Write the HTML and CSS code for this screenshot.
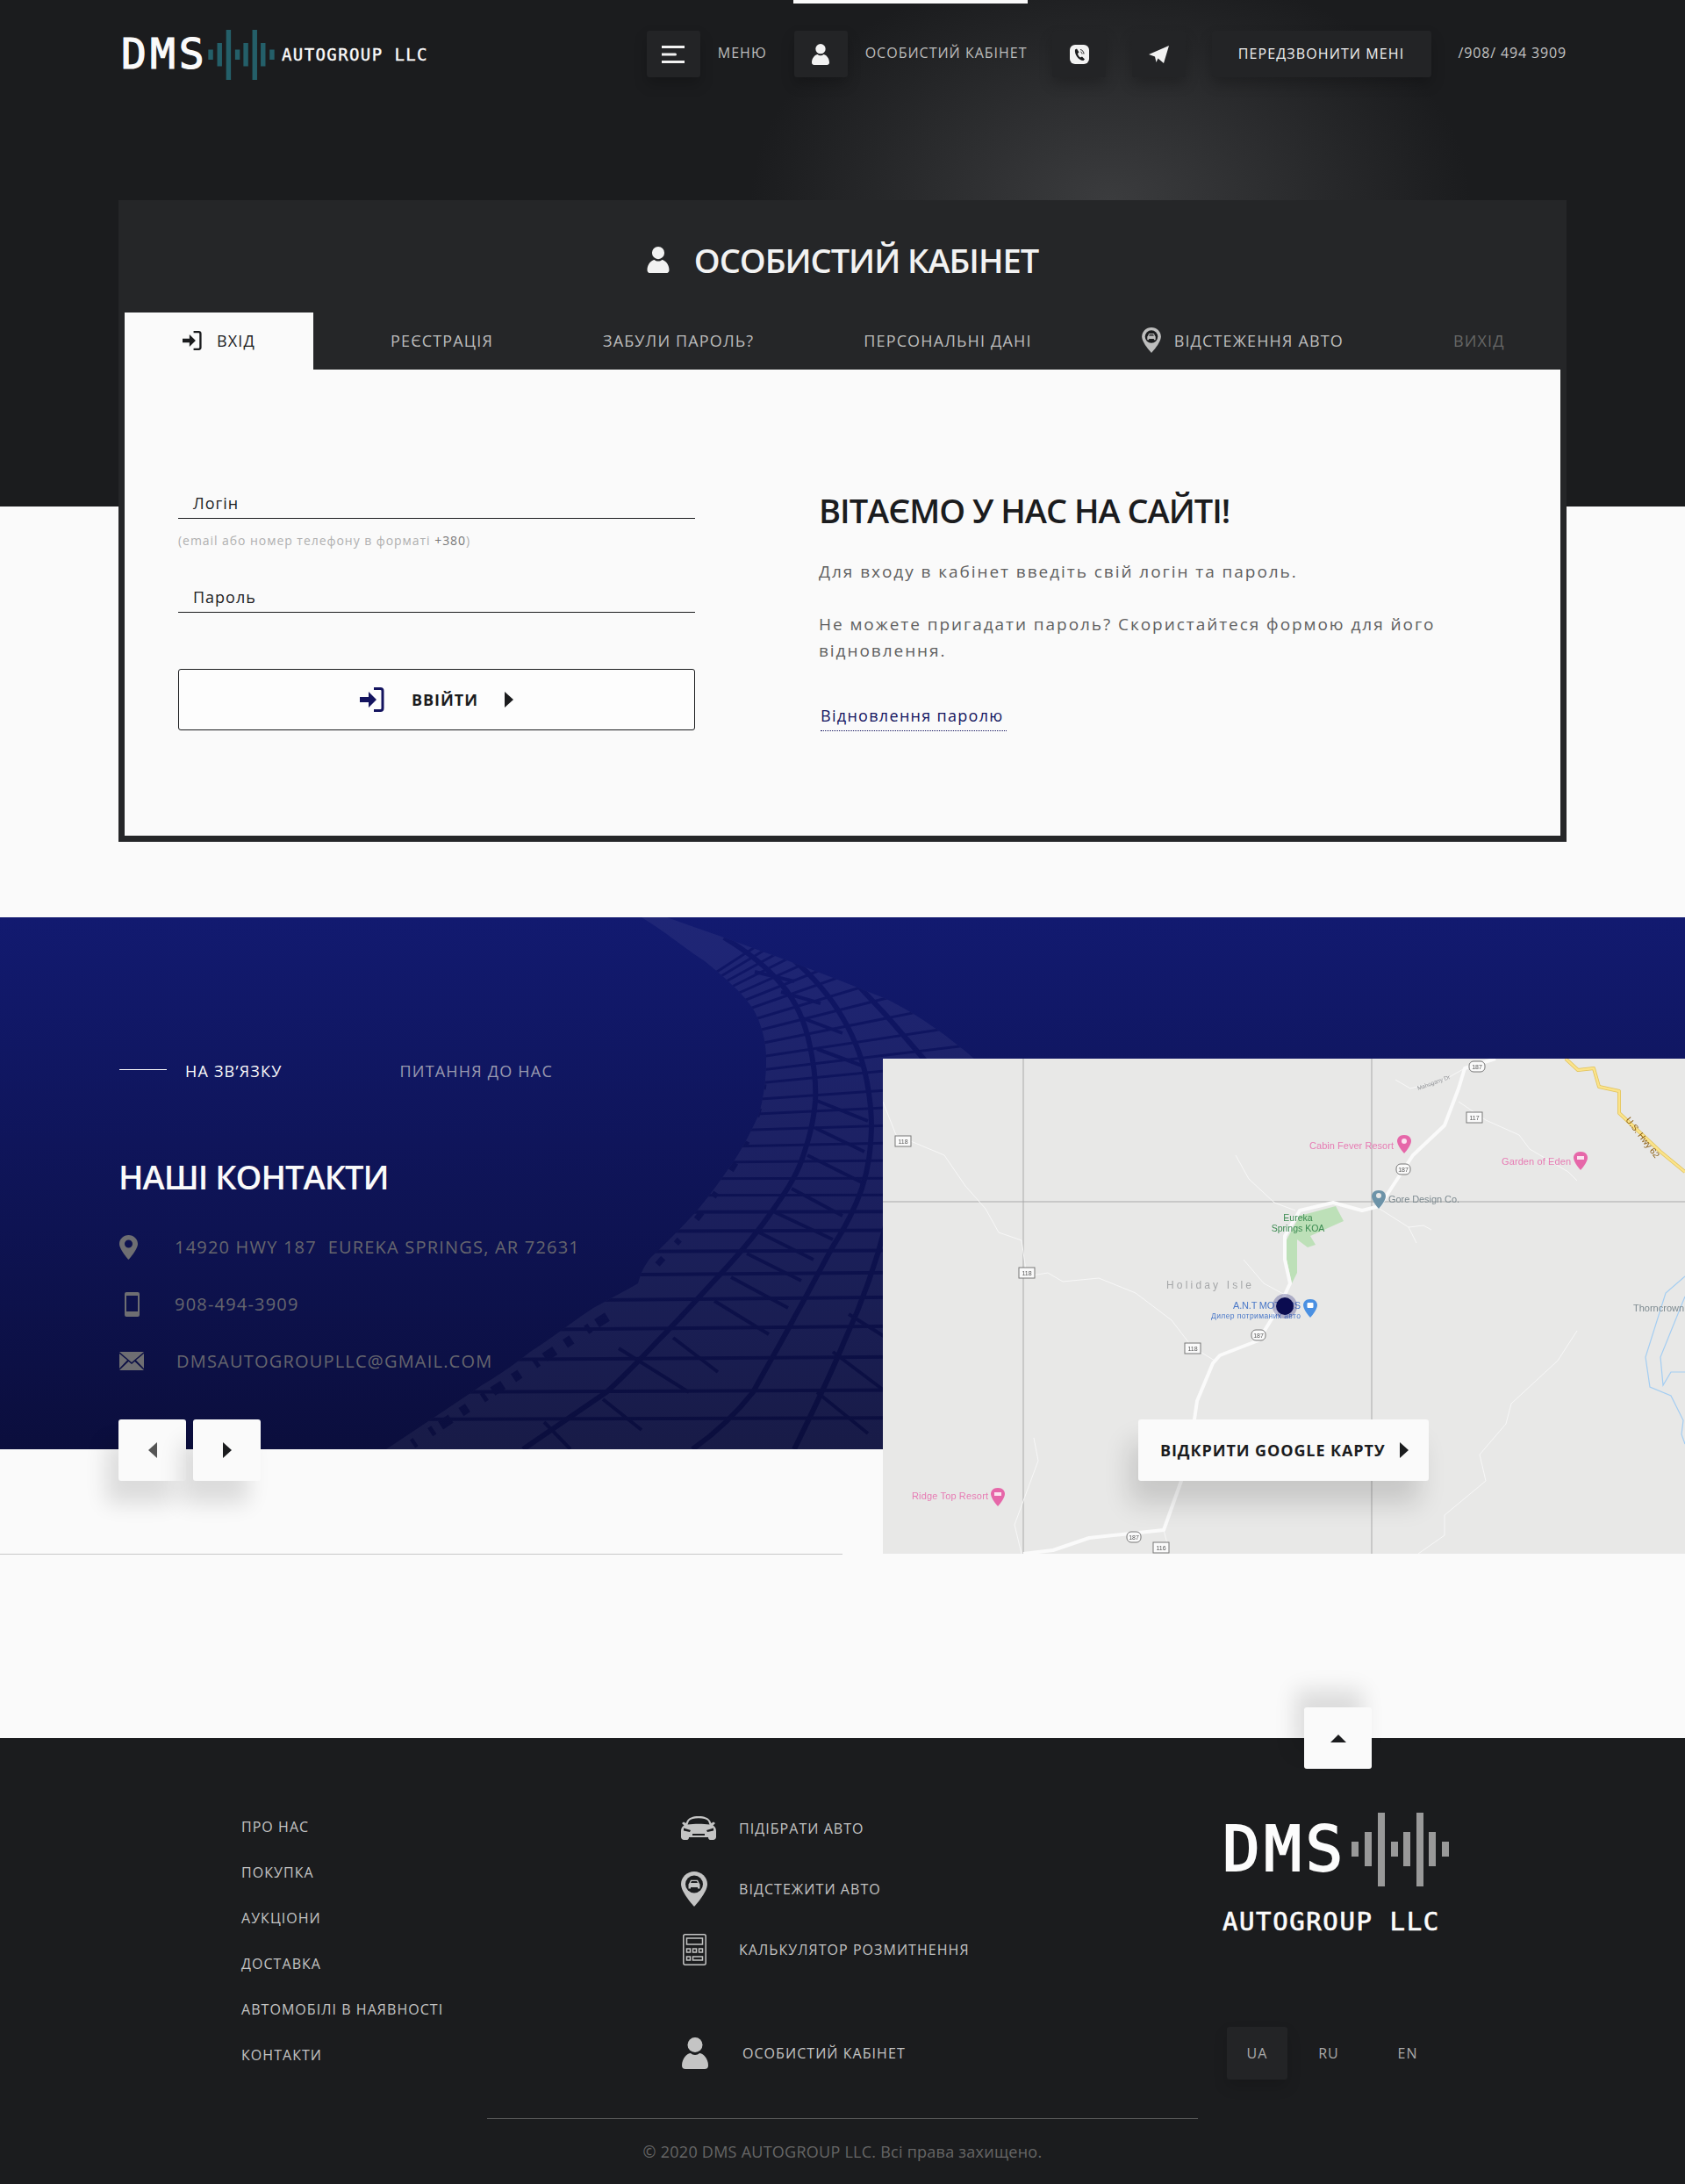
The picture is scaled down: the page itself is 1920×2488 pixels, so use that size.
FILE: index.html
```
<!DOCTYPE html>
<html lang="uk">
<head>
<meta charset="utf-8">
<title>DMS Autogroup LLC</title>
<link rel="stylesheet" href="styles.css">
</head>
<body>
<svg class="defs" width="0" height="0" aria-hidden="true">
  <symbol id="i-person" viewBox="0 0 30 36"><circle cx="15" cy="8.5" r="8.5"/><path d="M0 32C0 24 6 18 10 18 12 20.5 18 20.5 20 18 24 18 30 24 30 32 30 35 28 36 26 36H4C2 36 0 35 0 32Z"/></symbol>
  <symbol id="i-login" viewBox="0 0 28 28"><path d="M0 11H10V5L19 14 10 23V17H0Z"/><path d="M16 1.500H23.500Q26 1.500 26 4V24Q26 26.500 23.500 26.500H16" fill="none" stroke="currentColor" stroke-width="3"/></symbol>
  <symbol id="i-bars" viewBox="0 0 111 84"><path d="M0 33H8V50H0ZM15 22H23V61H15ZM30 0H38V84H30ZM45 33H53V50H45ZM59 22H67V61H59ZM74 0H82V84H74ZM88 22H96V61H88ZM103 33H111V50H103Z"/></symbol>
  <symbol id="i-car" viewBox="0 0 40 27"><path fill-rule="evenodd" d="M7 5C9 2 13 0 20 0S31 2 33 5L34.500 8 37 6.500 39 8 36.500 10.500C39 12 40 14 40 17V23.500C40 25.500 38.500 27 36.500 27H33.500C31.500 27 31 25.500 31 24H9C9 25.500 8.500 27 6.500 27H3.500C1.500 27 0 25.500 0 23.500V17C0 14 1 12 3.500 10.500L1 8 3 6.500 5.500 8ZM9 5.500 7.500 9.500C15 8.500 25 8.500 32.500 9.500L31 5.500C29 3 25 2.200 20 2.200S11 3 9 5.500ZM3 13.500V16.500L10 18 11 16ZM37 13.500 29 16 30 18 37 16.500ZM13 20V22H27V20Z"/></symbol>
  <symbol id="i-pin-car" viewBox="0 0 30 40"><path d="M15 0C6.700 0 0 6.500 0 14.500 0 24 15 40 15 40S30 24 30 14.500C30 6.500 23.300 0 15 0Z"/><circle cx="15" cy="14.500" r="10" fill="#1b1c1e"/><path d="M9.500 13 11 9.800H19L20.500 13 21.500 14.500V19.500H19V18H11V19.500H8.500V14.500ZM11 13H19L18 11H12Z"/></symbol>
</svg>

<div class="top">
  <header class="header">
    <a class="logo">
      <span class="logo-dms">DMS</span>
      <svg class="logo-bars"><use href="#i-bars"/></svg>
      <span class="logo-sub">AUTOGROUP LLC</span>
    </a>
    <nav class="nav">
      <span class="sq-btn"><svg class="i-menu" viewBox="0 0 26 20"><path d="M0 1.500H26M0 10H15.500M0 18.500H26"/></svg></span>
      <span class="nav-text nav-text-menu">МЕНЮ</span>
      <span class="sq-btn sq-account"><svg class="i-person-nav"><use href="#i-person"/></svg></span>
      <span class="nav-text nav-text-account">ОСОБИСТИЙ КАБІНЕТ</span>
      <span class="sq-btn sq-viber"><svg class="i-viber" viewBox="0 0 22 22"><rect width="22" height="22" rx="6" fill="#f2f2f2"/><path d="M6 5.500 8 4.500 10.500 8.500 9 10C9.500 12 10.500 13.500 12 14.500L14 13.500 17 16.500 15.500 18C10 18 5 11 6 5.500Z" fill="#1b1c1e"/><path d="M12 5.500C14.500 6 16 8 16 10.500M12.500 8C13.500 8.300 14 9.300 14 10.500" fill="none" stroke="#1b1c1e"/></svg></span>
      <span class="sq-btn sq-tg"><svg class="i-tg" viewBox="0 0 23 20"><path d="M23 0 17 20 10.500 14.500 8.500 19 7 12.500 0 10Z" fill="#f2f2f2"/></svg></span>
      <span class="call-btn">ПЕРЕДЗВОНИТИ МЕНІ</span>
      <span class="phone">/908/ 494 3909</span>
    </nav>
  </header>

  <main class="card">
    <h1 class="card-title"><svg class="i-title-person"><use href="#i-person"/></svg>ОСОБИСТИЙ КАБІНЕТ</h1>
    <div class="tabs">
      <a class="tab tab-active"><svg class="i-tab-login"><use href="#i-login"/></svg>ВХІД</a>
      <a class="tab tab-first">РЕЄСТРАЦІЯ</a>
      <a class="tab">ЗАБУЛИ ПАРОЛЬ?</a>
      <a class="tab">ПЕРСОНАЛЬНІ ДАНІ</a>
      <a class="tab tab-track"><svg class="i-tab-pin"><use href="#i-pin-car"/></svg>ВІДСТЕЖЕННЯ АВТО</a>
      <a class="tab tab-exit">ВИХІД</a>
    </div>
    <div class="panel">
      <form class="login-form">
        <div class="field">Логін</div>
        <p class="hint">(email або номер телефону в форматі <b>+380</b>)</p>
        <div class="field field-pass">Пароль</div>
        <button class="login-btn" type="button">
          <svg class="i-btn-login"><use href="#i-login"/></svg>
          <span>ВВІЙТИ</span>
          <i class="arrow-r"></i>
        </button>
      </form>
      <div class="welcome">
        <h2 class="welcome-title">ВІТАЄМО У НАС НА САЙТІ!</h2>
        <p class="welcome-p">Для входу в кабінет введіть свій логін та пароль.</p>
        <p class="welcome-p welcome-p2">Не можете пригадати пароль? Скористайтеся формою для його відновлення.</p>
        <a class="restore">Відновлення паролю</a>
      </div>
    </div>
  </main>
</div>

<section class="contacts">
  <div class="contacts-bg">
    <svg class="tire" viewBox="0 0 1920 606">
      <defs>
        <clipPath id="tireclip"><path d="M731 0C760 18 780 35 803 50 825 68 845 85 858 104 868 122 873 142 873 162 873 185 870 205 865 224 855 245 848 260 836 278 822 298 810 315 796 332 780 350 760 370 742 387 735 395 730 405 727 417 708 428 692 436 676 445 650 462 628 480 604 495 585 510 568 522 549 533 510 560 475 582 440 606H1110V161C1080 135 1045 110 1010 93 930 60 845 30 760 0Z"/></clipPath>
        <linearGradient id="tread" gradientUnits="userSpaceOnUse" x1="0" y1="0" x2="0" y2="606"><stop offset="0" stop-color="#10176a"/><stop offset="1" stop-color="#0b0e3d"/></linearGradient>
      </defs>
      <g clip-path="url(#tireclip)" fill="none">
        <rect x="400" y="0" width="800" height="606" fill="#fff" fill-opacity=".055"/>
        <g stroke="url(#tread)">
          <g stroke-width="3">
            <path d="M800 182 1110 145M800 169 1110 122M800 157 1110 95M800 145 1110 67M800 134 1110 41M800 123 1110 14.500M800 114 1110-10M800 105 1110-34M800 96 1110-59M800 88 1110-82M800 80 1110-106M800 73 1110-128"/>
            <path d="M780 197 1110 165M780 213 1110 190M780 228 1110 212"/>
            <path d="M760 245 1110 234M740 263 1110 255M720 280 1110 276M700 298 1110 297M680 317 1110 316"/>
          </g>
          <g stroke-width="4">
            <path d="M660 336 1110 335M640 358 1110 356M620 381 1110 379M600 408 1110 404M580 437 1110 432M560 470 1110 465M530 504 1110 500M480 541 1110 538M420 572 1110 570"/>
            <path d="M767 479 818 518M705 491 785 541M814 437 876 475M833 410 898 445M851 383 913 414M865 359 927 390M883 336 949 367M902 309 960 340M920 271 982 302M929 240 985 267M931 209 989 232M687 549 731 584M949 495 1010 541M967 452 1010 479M931 541 989 588M620 575 650 606"/>
            <path d="M931 150 985 170M915 115 960 132M890 85 935 98M860 62 905 73"/>
          </g>
          <g stroke-width="6">
            <path d="M825 23C850 38 875 58 891 77 908 97 918 122 923 147 928 170 930 190 929 209 927 235 921 255 913 278 905 300 890 320 876 340 855 370 832 395 811 417 790 440 770 462 749 483 730 503 712 522 691 541L596 606"/>
            <path d="M887 35C915 55 933 75 949 97 965 120 978 147 985 174 990 195 993 218 993 240 992 265 990 285 982 309 973 335 962 355 949 375 935 400 920 430 905 456 890 485 873 513 858 541 835 570 812 590 789 606"/>
            <path d="M967 66 1010 112 1060 170M1010 348C998 395 982 440 962 483 945 525 925 565 905 606"/>
          </g>
          <path stroke-width="11" stroke-dasharray="14 9 5 20 9 14" d="M692 455C660 475 630 495 600 515 570 535 530 560 470 600"/>
          <path stroke-width="7" stroke-dasharray="6 22 10 30" d="M870 190C866 225 850 265 825 300 800 340 770 372 745 400"/>
        </g>
      </g>
    </svg>
  </div>
  <div class="contact-left">
    <div class="contact-tabs">
      <i class="contact-line"></i>
      <a class="ctab ctab-active">НА ЗВ’ЯЗКУ</a>
      <a class="ctab">ПИТАННЯ ДО НАС</a>
    </div>
    <h2 class="contact-title">НАШІ КОНТАКТИ</h2>
    <div class="contact-row">
      <svg class="ci ci-pin" viewBox="0 0 21 28"><path fill-rule="evenodd" d="M10.500 0C4.700 0 0 4.500 0 10 0 16.500 10.500 28 10.500 28S21 16.500 21 10C21 4.500 16.300 0 10.500 0ZM10.500 5.500A4.500 4.500 0 1 1 10.500 14.500 4.500 4.500 0 0 1 10.500 5.500Z"/></svg>
      <span>14920 HWY 187&nbsp; EUREKA SPRINGS, AR 72631</span>
    </div>
    <div class="contact-row">
      <svg class="ci ci-phone" viewBox="0 0 17 28"><path fill-rule="evenodd" d="M2 0H15Q17 0 17 2V26Q17 28 15 28H2Q0 28 0 26V2Q0 0 2 0ZM2 4V22H15V4Z"/></svg>
      <span>908-494-3909</span>
    </div>
    <div class="contact-row">
      <svg class="ci ci-mail" viewBox="0 0 28 21"><path d="M0 0 14 12 28 0ZM0 2V19L9 9.500ZM28 2 19 9.500 28 19ZM0 21H28L17.500 11 14 14 10.500 11Z"/></svg>
      <span class="contact-mail">DMSAUTOGROUPLLC@GMAIL.COM</span>
    </div>
    <div class="arrows">
      <a class="arrow-btn"><i class="arrow-l"></i></a>
      <a class="arrow-btn"><i class="arrow-r"></i></a>
    </div>
    <hr class="contact-hr">
  </div>
  <div class="map">
    <svg class="map-svg" viewBox="0 0 914 564" font-family="'Liberation Sans', sans-serif">
      <path d="M160 0V564M557 0V564M0 163H914" stroke="#a9a9a9" fill="none"/>
      <path d="M516 168 525 185 487 202 493 212 484 215 472 206 472 244 466 256 460 229 458 210 475 179Z" fill="#bde0b8"/>
      <g fill="none" stroke="#f7f7f7" stroke-width="1" stroke-linejoin="round">
        <path d="M0 49 15 87 70 110 94 145 117 171 132 198 158 207 164 248 188 244 205 254 246 250 288 267 329 298 352 328 378 344"/>
        <path d="M402 110 417 137 446 164 470 173"/>
        <path d="M411 229 434 256 458 269"/>
        <path d="M566 171 599 192 616 190 625 195M599 192 608 210"/>
        <path d="M584 24 601 34 640 24 663 11"/>
        <path d="M656 49 687 70 725 87 737 103 781 129 791 139"/>
        <path d="M791 310 769 344 716 393 710 416 680 451 687 481 640 520 640 543 610 564"/>
        <path d="M172 432 177 458 150 531 158 564"/>
        <path d="M320 537 326 560"/>
      </g>
      <path fill="none" stroke="#fafafa" stroke-width="4" stroke-linejoin="round" d="M698 0 663 11 656 34 640 76 604 110 581 145 566 168 546 173 513 164 475 173 458 202 458 229 464 256 452 282 428 321 384 338 376 347 358 390 355 411 340 481 320 537 235 546 194 560 160 564"/>
      <path fill="none" stroke="#e0c25a" stroke-width="4" stroke-linejoin="round" d="M778 0 792 13 810 11 816 32 839 37 839 62 886 106 914 129"/>
      <path fill="none" stroke="#fbe38a" stroke-width="2.500" stroke-linejoin="round" d="M778 0 792 13 810 11 816 32 839 37 839 62 886 106 914 129"/>
      <g fill="none" stroke="#a3cdf2" stroke-width="1.200">
        <path d="M914 248 892 267 869 340 874 374 898 384 912 412 910 428 914 439"/>
        <path d="M914 271 886 340 889 372 898 357 914 357"/>
      </g>
      <g font-size="11" fill="#e77cb4">
        <text x="486" y="103" textLength="96">Cabin Fever Resort</text>
        <text x="705" y="121" textLength="79">Garden of Eden</text>
        <text x="33" y="502" textLength="87">Ridge Top Resort</text>
      </g>
      <g fill="#e667a9">
        <path d="M594 87C587 87 586 92 586 94 586 99 594 108 594 108S602 99 602 94C602 92 601 87 594 87Z"/>
        <path d="M795 106C788 106 787 111 787 113 787 118 795 127 795 127S803 118 803 113C803 111 802 106 795 106Z"/>
        <path d="M131 489C124 489 123 494 123 496 123 501 131 510 131 510S139 501 139 496C139 494 138 489 131 489Z"/>
      </g>
      <g fill="#fbe3f0"><circle cx="594" cy="94" r="3"/><rect x="791" y="111" width="8" height="4"/><rect x="127" y="494" width="8" height="4"/></g>
      <path d="M565 150C558 150 557 155 557 157 557 162 565 171 565 171S573 162 573 157C573 155 572 150 565 150Z" fill="#6d93a8"/>
      <circle cx="565" cy="156" r="3" fill="#e8e8e7"/>
      <path d="M487 274C480 274 479 279 479 281 479 286 487 295 487 295S495 286 495 281C495 279 494 274 487 274Z" fill="#4a90e2"/>
      <rect x="483.500" y="278" width="7" height="6" rx="1" fill="#fff"/>
      <text x="576" y="164" font-size="11" fill="#7d8a90" textLength="81">Gore Design Co.</text>
      <g font-size="10.500" fill="#3a8a50" text-anchor="middle"><text x="473" y="185">Eureka</text><text x="473" y="197">Springs KOA</text></g>
      <text x="323" y="262" font-size="12" fill="#a5a7a9" textLength="97">Holiday Isle</text>
      <text x="399" y="285" font-size="11" fill="#4a78c8" textLength="77">A.N.T MOTORS</text>
      <text x="374" y="296" font-size="8.500" fill="#4a78c8" textLength="102">Дилер потриманих авто</text>
      <text x="855" y="288" font-size="11" fill="#7d8a90">Thorncrown</text>
      <text x="0" y="0" font-size="10" fill="#8a5c10" transform="translate(846 70) rotate(52)">U.S. Hwy 62</text>
      <text x="0" y="0" font-size="6.500" fill="#8e9094" transform="translate(610 36) rotate(-20)">Mahogany Dr</text>
      <g fill="#fafafa" stroke="#777" font-size="7">
        <rect x="668" y="3" width="18" height="12" rx="5"/><rect x="585" y="120" width="16" height="12" rx="5"/><rect x="420" y="309" width="16" height="12" rx="5"/><rect x="278" y="539" width="16" height="12" rx="5"/>
        <rect x="665" y="61" width="18" height="12"/><rect x="14" y="88" width="18" height="12"/><rect x="155" y="238" width="18" height="12"/><rect x="344" y="324" width="18" height="12"/><rect x="308" y="551" width="18" height="12"/>
      </g>
      <g fill="#555" font-size="7" text-anchor="middle">
        <text x="677" y="12">187</text><text x="593" y="129">187</text><text x="428" y="318">187</text><text x="286" y="548">187</text>
        <text x="674" y="70">117</text><text x="23" y="97">118</text><text x="164" y="247">118</text><text x="353" y="333">118</text><text x="317" y="560">116</text>
      </g>
      <circle cx="458" cy="282" r="14" fill="#23237a" fill-opacity=".3"/>
      <circle cx="458" cy="282" r="10" fill="#0b0c50"/>
    </svg>
    <a class="map-btn">ВІДКРИТИ GOOGLE КАРТУ<i class="arrow-r"></i></a>
  </div>
</section>

<footer class="footer">
  <a class="up-btn"><i class="arrow-u"></i></a>
  <div class="footer-grid">
    <ul class="f-links">
      <li>ПРО НАС</li>
      <li>ПОКУПКА</li>
      <li>АУКЦІОНИ</li>
      <li>ДОСТАВКА</li>
      <li>АВТОМОБІЛІ В НАЯВНОСТІ</li>
      <li>КОНТАКТИ</li>
    </ul>
    <div class="f-services">
      <a class="f-row"><span class="f-ico"><svg class="fi-car"><use href="#i-car"/></svg></span>ПІДІБРАТИ АВТО</a>
      <a class="f-row"><span class="f-ico"><svg class="fi-pin"><use href="#i-pin-car"/></svg></span>ВІДСТЕЖИТИ АВТО</a>
      <a class="f-row"><span class="f-ico"><svg class="fi-calc" viewBox="0 0 27 36"><g fill="none" stroke="#c4c4c4" stroke-width="1.500"><rect x=".8" y=".8" width="25.400" height="34.400" rx="2"/><rect x="4.500" y="5" width="18" height="7"/><rect x="4.500" y="17" width="4" height="4"/><rect x="11.500" y="17" width="4" height="4"/><rect x="18.500" y="17" width="4" height="4"/><rect x="4.500" y="26" width="4" height="4"/><rect x="11.500" y="26" width="11" height="4"/></g></svg></span>КАЛЬКУЛЯТОР РОЗМИТНЕННЯ</a>
      <a class="f-row f-row-account"><span class="f-ico f-ico-account"><svg class="fi-person"><use href="#i-person"/></svg></span>ОСОБИСТИЙ КАБІНЕТ</a>
    </div>
    <div class="f-brand">
      <div class="f-logo">
        <span class="f-dms">DMS</span>
        <svg class="f-bars"><use href="#i-bars"/></svg>
      </div>
      <div class="f-sub">AUTOGROUP LLC</div>
      <div class="langs">
        <a class="lang lang-active">UA</a>
        <a class="lang lang-ru">RU</a>
        <a class="lang lang-en">EN</a>
      </div>
    </div>
  </div>
  <hr class="f-hr">
  <p class="copy">© 2020 DMS AUTOGROUP LLC. Всі права захищено.</p>
</footer>
</body>
</html>
```
FILE: styles.css
```
* { box-sizing: border-box; }
html, body { margin: 0; padding: 0; }
body {
  width: 1920px;
  height: 2488px;
  overflow: hidden;
  background: #fafafa;
  font-family: "Open Sans", "Noto Sans", sans-serif;
  color: #1b1c1e;
}
.defs { position: absolute; }
a { color: inherit; text-decoration: none; }
h1, h2, p, ul { margin: 0; padding: 0; }
ul { list-style: none; }
i { display: block; }

/* top area */
.top {
  padding: 0 135px;
  background:
    radial-gradient(ellipse 410px 270px at 1265px 228px, #3b3c3e 0%, rgba(59, 60, 62, 0) 100%) 0 0 / 100% 577px no-repeat,
    linear-gradient(#1b1c1e, #1b1c1e) 0 0 / 100% 577px no-repeat;
}
.header { display: flex; height: 228px; padding-top: 35px; align-items: flex-start; }
.logo { display: flex; align-items: center; height: 53px; margin-left: 3px; color: #fafafa; }
.logo-dms {
  font: 400 48px/53px "DejaVu Sans Mono", monospace; letter-spacing: 4px; width: 99px; white-space: nowrap;
  -webkit-text-stroke: 1.200px #fafafa;
}
.logo-bars { width: 76px; height: 57px; fill: #245f69; flex: none; margin-top: 1px; }
.logo-sub {
  font: 400 19px/1 "DejaVu Sans Mono", monospace; letter-spacing: 1.400px; margin-left: 8px; margin-top: 1px; white-space: nowrap;
  -webkit-text-stroke: .4px #fafafa;
}

.nav { display: flex; align-items: flex-start; margin-left: auto; }
.sq-btn {
  display: flex; align-items: center; justify-content: center;
  width: 61px; height: 53px;
  background: #232426;
  border-radius: 3px;
  box-shadow: 0 8px 16px rgba(0, 0, 0, .2);
  flex: none;
}
.sq-account { position: relative; }
.sq-account::before {
  content: ""; position: absolute; top: -35px; left: -1px;
  width: 267px; height: 4px; background: #fafafa;
}
.i-menu { width: 26px; height: 20px; fill: none; stroke: #f2f2f2; stroke-width: 3; stroke-linecap: round; }
.i-person-nav { width: 20px; height: 24px; fill: #f2f2f2; }
.i-viber { width: 22px; height: 22px; margin-left: 2px; }
.i-tg { width: 23px; height: 20px; }
.nav-text {
  font-size: 16px; line-height: 50px; color: #bdbdbd; letter-spacing: 1px; white-space: nowrap;
}
.nav-text-menu { margin: 0 31px 0 20px; }
.nav-text-account { margin: 0 28px 0 20px; }
.sq-tg { margin-left: 30px; }
.call-btn {
  width: 250px; height: 53px; margin-left: 30px;
  background: #232426; border-radius: 3px; box-shadow: 0 8px 16px rgba(0, 0, 0, .2);
  font-size: 16px; line-height: 53px; color: #f0f0f0; letter-spacing: 1.100px; text-align: center; white-space: nowrap;
}
.phone { margin-left: 31px; font-size: 16px; line-height: 50px; color: #c4c4c4; letter-spacing: .85px; white-space: nowrap; }

/* card */
.card { background: #252628; padding: 0 7px 7px; height: 731px; }
.card-title {
  display: flex; align-items: center; justify-content: center;
  height: 128px; padding-top: 8px;
  font-weight: 600; font-size: 38px; line-height: 44px; letter-spacing: -1px; color: #f2f2f2; white-space: nowrap;
}
.i-title-person { width: 26px; height: 30px; fill: #f2f2f2; margin-right: 28px; }
.tabs { display: flex; height: 65px; }
.tab {
  display: flex; align-items: center; margin-left: 125px; padding-bottom: 2px;
  font-size: 18px; letter-spacing: 1.150px; color: #bdbdbd; white-space: nowrap;
}
.tab-active {
  width: 215px; margin-left: 0; padding-left: 66px;
  background: #fafafa; color: #1b1c1e;
}
.tab-first { margin-left: 88px; }
.tab-exit { color: #666; }
.i-tab-login { width: 22px; height: 22px; fill: #1b1c1e; color: #1b1c1e; margin-right: 17px; }
.i-tab-pin { width: 22px; height: 29px; fill: #bdbdbd; margin-right: 15px; }
.panel { display: flex; height: 531px; background: #fafafa; padding-left: 61px; }
.login-form { width: 589px; padding-top: 140px; flex: none; }
.field {
  height: 30px; padding: 0 0 4px 17px;
  border-bottom: 1px solid #1b1c1e;
  font-size: 18px; line-height: 25px; letter-spacing: 1px; color: #1b1c1e;
}
.hint { margin-top: 15px; font-size: 14px; line-height: 20px; letter-spacing: .95px; color: #b0b0b0; }
.hint b { font-weight: 400; color: #777; }
.field-pass { margin-top: 42px; }
.login-btn {
  display: flex; align-items: center; justify-content: center;
  width: 100%; height: 70px; margin-top: 64px;
  background: #fdfdfd; border: 1px solid #1b1c1e; border-radius: 3px;
  font: 700 18px/1 "Open Sans", sans-serif; letter-spacing: 1px; color: #1b1c1e;
}
.i-btn-login { width: 28px; height: 28px; fill: #14145f; color: #14145f; margin-right: 31px; }
.login-btn .arrow-r { margin-left: 30px; }
.arrow-r { width: 0; height: 0; border-style: solid; border-width: 9px 0 9px 10px; border-color: transparent transparent transparent #1b1c1e; flex: none; }
.arrow-l { width: 0; height: 0; border-style: solid; border-width: 9px 10px 9px 0; border-color: transparent #555 transparent transparent; flex: none; }
.arrow-u { width: 0; height: 0; border-style: solid; border-width: 0 9px 9px; border-color: transparent transparent #1b1c1e; }
.welcome { margin-left: 141px; padding-top: 138px; width: 720px; }
.welcome-title { font-weight: 600; font-size: 38px; line-height: 44px; letter-spacing: -1px; color: #1b1c1e; white-space: nowrap; }
.welcome-p { margin-top: 33px; font-size: 19px; line-height: 30px; letter-spacing: 1.950px; color: #5f5f5f; }
.welcome-p2 { margin-top: 30px; }
.restore {
  display: inline-block; margin: 47px 0 0 2px; padding: 0 3px 5px 0;
  border-bottom: 1px dotted #14145f;
  font-size: 18px; line-height: 24px; letter-spacing: 1.300px; color: #14145f;
}

/* contacts */
.contacts {
  position: relative;
  display: grid; grid-template-columns: 1006px 914px;
  margin-top: 86px;
  height: 726px;
}
.contacts-bg {
  position: absolute; top: 0; left: 0; width: 100%; height: 606px;
  background: linear-gradient(#121a70, #0b0e3d);
  overflow: hidden;
}
.tire { width: 100%; height: 100%; display: block; }
.contact-left { position: relative; padding: 163px 0 0 135px; }
.contact-tabs { display: flex; align-items: center; height: 24px; }
.contact-line { width: 54px; height: 1px; background: #fafafa; margin: 0 21px 4px 1px; }
.ctab { font-size: 18px; line-height: 24px; letter-spacing: 1.200px; color: #9a9ab0; margin-right: 134px; white-space: nowrap; }
.ctab-active { color: #fafafa; }
.contact-title { margin-top: 86px; font-weight: 600; font-size: 38px; line-height: 44px; letter-spacing: -1px; color: #fafafa; white-space: nowrap; }
.contact-row { display: flex; align-items: center; height: 65px; font-size: 20px; letter-spacing: 1.200px; color: #66666e; white-space: nowrap; }
.contact-title + .contact-row { margin-top: 26px; }
.ci { fill: #6e6e72; flex: none; }
.ci-pin { width: 21px; height: 28px; margin: 0 42px 0 1px; }
.ci-phone { width: 17px; height: 28px; margin: 0 40px 0 7px; }
.ci-mail { width: 28px; height: 21px; margin: 0 37px 0 1px; }
.arrows { display: flex; gap: 8px; margin-top: 34px; }
.arrow-btn {
  display: flex; align-items: center; justify-content: center;
  width: 77px; height: 70px; background: #fafafa; border-radius: 3px;
  box-shadow: -14px 26px 24px rgba(0, 0, 0, .12);
}
.contact-hr { margin: 83px 0 0 -135px; width: 960px; height: 1px; border: 0; background: #c8c8c8; }
.map { position: relative; margin-top: 161px; height: 564px; background: #e8e8e7; overflow: hidden; }
.map-svg { display: block; width: 914px; height: 564px; filter: blur(.3px); }
.map-btn {
  position: absolute; left: 291px; top: 411px;
  display: flex; align-items: center;
  width: 331px; height: 70px; padding-left: 25px;
  background: #fafafa; border-radius: 3px;
  box-shadow: -10px 26px 30px rgba(0, 0, 0, .14);
  font-size: 18px; font-weight: 700; letter-spacing: .9px; color: #1b1c1e; white-space: nowrap;
}
.map-btn .arrow-r { margin-left: 16px; }

/* footer */
.footer { position: relative; margin-top: 209px; height: 508px; background: #1b1c1e; color: #c4c4c4; }
.up-btn {
  position: absolute; left: 1486px; top: -35px;
  display: flex; align-items: center; justify-content: center;
  width: 77px; height: 70px; background: #fafafa; border-radius: 3px;
  box-shadow: -10px -20px 24px rgba(0, 0, 0, .12);
}
.footer-grid { display: grid; grid-template-columns: 501px 617px 1fr; padding: 68px 0 0 275px; height: 433px; }
.f-links { margin-top: 7px; font-size: 16px; letter-spacing: 1.050px; }
.f-links li { height: 52px; line-height: 52px; white-space: nowrap; }
.f-row { display: flex; align-items: center; height: 69px; font-size: 16px; letter-spacing: 1.050px; white-space: nowrap; }
.f-ico { display: flex; width: 66px; align-items: center; flex: none; }
.f-ico-account { width: 70px; }
.f-row-account { margin-top: 49.500px; }
.fi-car { width: 40px; height: 27px; fill: #c4c4c4; }
.fi-pin { width: 30px; height: 40px; fill: #c4c4c4; }
.fi-calc { width: 27px; height: 36px; margin-left: 2px; }
.fi-person { width: 30px; height: 36px; margin-left: 1px; fill: #c4c4c4; }
.f-brand { padding-top: 17px; color: #fcfcfc; }
.f-logo { display: flex; align-items: center; height: 84px; }
.f-dms {
  font: 400 71px/84px "DejaVu Sans Mono", monospace; letter-spacing: 4.500px; width: 147px; white-space: nowrap;
  -webkit-text-stroke: 1.800px #fcfcfc;
}
.f-bars { width: 111px; height: 84px; fill: #999; flex: none; }
.f-sub {
  margin-top: 26px; font: 400 29px/1 "DejaVu Sans Mono", monospace; letter-spacing: 1.600px; white-space: nowrap;
  -webkit-text-stroke: .7px #fcfcfc;
}
.langs { display: flex; margin: 105px 0 0 5px; height: 60px; font-size: 16px; letter-spacing: 1px; color: #aaa; }
.lang { display: flex; align-items: center; justify-content: center; }
.lang-active { width: 69px; background: #232426; border-radius: 3px; box-shadow: 0 8px 16px rgba(0, 0, 0, .15); }
.lang-ru { width: 94px; }
.lang-en { width: 86px; }
.f-hr { width: 810px; height: 1px; margin: 0 0 0 555px; border: 0; background: #5c5c5c; }
.copy { margin-top: 25px; text-align: center; font-size: 18px; line-height: 24px; letter-spacing: .25px; color: #666; }
```
